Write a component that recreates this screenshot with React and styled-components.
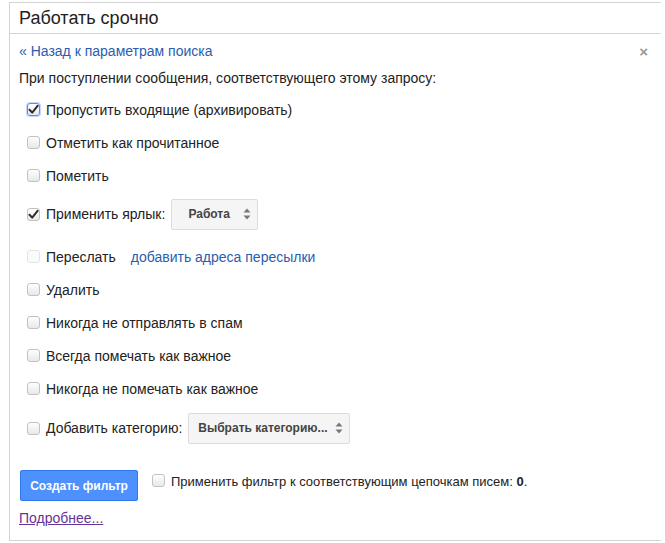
import React from "react";
import styled, { createGlobalStyle } from "styled-components";

const Global = createGlobalStyle`
  body {
    margin: 0;
    background: #ffffff;
    font-family: "Liberation Sans", Arial, sans-serif;
    color: #222222;
  }
`;

const Page = styled.div`
  padding: 2px 0 0 9px;
`;

const Panel = styled.div`
  width: 651px;
  border: 1px solid #d4d4d4;
  border-right: none;
`;

const Header = styled.div`
  height: 30px;
  padding-left: 9px;
  display: flex;
  align-items: center;
  font-size: 18px;
  color: #222;
  border-bottom: 1px solid #d4d4d4;
`;

const Body = styled.div`
  padding: 8px 12px 13px 9px;
`;

const TopBar = styled.div`
  height: 18px;
  display: flex;
  align-items: center;
  justify-content: space-between;
`;

const Link = styled.a`
  color: #2a5db0;
  text-decoration: none;
  font-size: 14px;
  cursor: pointer;
`;

const Close = styled.span`
  color: #999;
  font-size: 15px;
  font-weight: bold;
  line-height: 1;
  margin-right: 1px;
`;

const Description = styled.div`
  margin-top: 9px;
  line-height: 18px;
  font-size: 14px;
`;

const Actions = styled.div`
  margin-top: 6px;
  display: flex;
  flex-direction: column;
`;

const Row = styled.label`
  height: ${(p) => p.$h || 33}px;
  margin-top: ${(p) => p.$mt || 0}px;
  padding-left: 8px;
  display: flex;
  align-items: center;
  font-size: 14px;
  color: #222;
`;

const Box = styled.span`
  width: 13px;
  height: 13px;
  box-sizing: border-box;
  flex-shrink: 0;
  margin-right: 6px;
  border: 1px solid
    ${(p) => (p.$focus ? "#4d90fe" : p.$disabled ? "#e3e3e3" : "#c2c2c2")};
  border-radius: 3px;
  background: ${(p) =>
    p.$disabled ? "#fbfbfb" : "linear-gradient(#fefefe, #e8e8e8)"};
  box-shadow: ${(p) => (p.$focus ? "0 0 0 1px #c4d7fb" : "none")};
  display: inline-flex;
  align-items: center;
  justify-content: center;
`;

const Select = styled.div`
  width: ${(p) => p.$w}px;
  height: 31px;
  box-sizing: border-box;
  margin-left: 6px;
  padding: 0 6px 0 ${(p) => p.$pl}px;
  display: flex;
  align-items: center;
  border: 1px solid #dcdcdc;
  border-radius: 2px;
  background: #f5f5f5;
  font-size: 12px;
  font-weight: bold;
  color: #444;
`;

const Arrows = styled.svg`
  margin-left: auto;
`;

const Inline = styled.span`
  margin-left: 15px;
`;

const Footer = styled.div`
  margin-top: 19px;
  display: flex;
  align-items: flex-start;
`;

const Button = styled.button`
  width: 118px;
  height: 31px;
  margin-left: 1px;
  border: 1px solid #3079ed;
  border-radius: 2px;
  background: #4d90fe;
  color: #ffffff;
  font-family: "Liberation Sans", Arial, sans-serif;
  font-size: 12px;
  font-weight: bold;
  padding: 0;
`;

const ApplyLabel = styled.label`
  margin-left: 14px;
  margin-top: 4px;
  display: flex;
  align-items: flex-start;
  font-size: 13px;
  line-height: 16px;
  b {
    font-weight: bold;
  }
`;

const More = styled.a`
  display: block;
  margin-top: 8px;
  line-height: 18px;
  font-size: 14px;
  color: #663399;
  text-decoration: underline;
`;

function Check({ checked, focus, disabled }) {
  return (
    <Box $focus={focus} $disabled={disabled}>
      {checked && (
        <svg width="11" height="11" viewBox="0 0 11 11">
          <path
            d="M1.5 5.8 L4.2 8.6 L9.6 1.8"
            fill="none"
            stroke="#2b2b2b"
            strokeWidth="2"
            strokeLinecap="round"
            strokeLinejoin="round"
          />
        </svg>
      )}
    </Box>
  );
}

function UpDown() {
  return (
    <Arrows width="8" height="12" viewBox="0 0 8 12">
      <path d="M4 0.5 L7.5 4.5 H0.5 Z" fill="#777" />
      <path d="M4 11.5 L7.5 7.5 H0.5 Z" fill="#777" />
    </Arrows>
  );
}

export default function App() {
  return (
    <Page>
      <Global />
      <Panel>
        <Header>Работать срочно</Header>
        <Body>
          <TopBar>
            <Link>« Назад к параметрам поиска</Link>
            <Close>×</Close>
          </TopBar>
          <Description>
            При поступлении сообщения, соответствующего этому запросу:
          </Description>
          <Actions>
            <Row>
              <Check checked focus />
              Пропустить входящие (архивировать)
            </Row>
            <Row>
              <Check />
              Отметить как прочитанное
            </Row>
            <Row>
              <Check />
              Пометить
            </Row>
            <Row $h={44}>
              <Check checked />
              Применить ярлык:
              <Select $w={87} $pl={16}>
                Работа
                <UpDown />
              </Select>
            </Row>
            <Row $mt={4}>
              <Check disabled />
              Переслать
              <Inline>
                <Link>добавить адреса пересылки</Link>
              </Inline>
            </Row>
            <Row>
              <Check />
              Удалить
            </Row>
            <Row>
              <Check />
              Никогда не отправлять в спам
            </Row>
            <Row>
              <Check />
              Всегда помечать как важное
            </Row>
            <Row>
              <Check />
              Никогда не помечать как важное
            </Row>
            <Row $h={46}>
              <Check />
              Добавить категорию:
              <Select $w={162} $pl={9}>
                Выбрать категорию...
                <UpDown />
              </Select>
            </Row>
          </Actions>
          <Footer>
            <Button>Создать фильтр</Button>
            <ApplyLabel>
              <Check />
              <span>
                Применить фильтр к соответствующим цепочкам писем: <b>0</b>.
              </span>
            </ApplyLabel>
          </Footer>
          <More>Подробнее...</More>
        </Body>
      </Panel>
    </Page>
  );
}
